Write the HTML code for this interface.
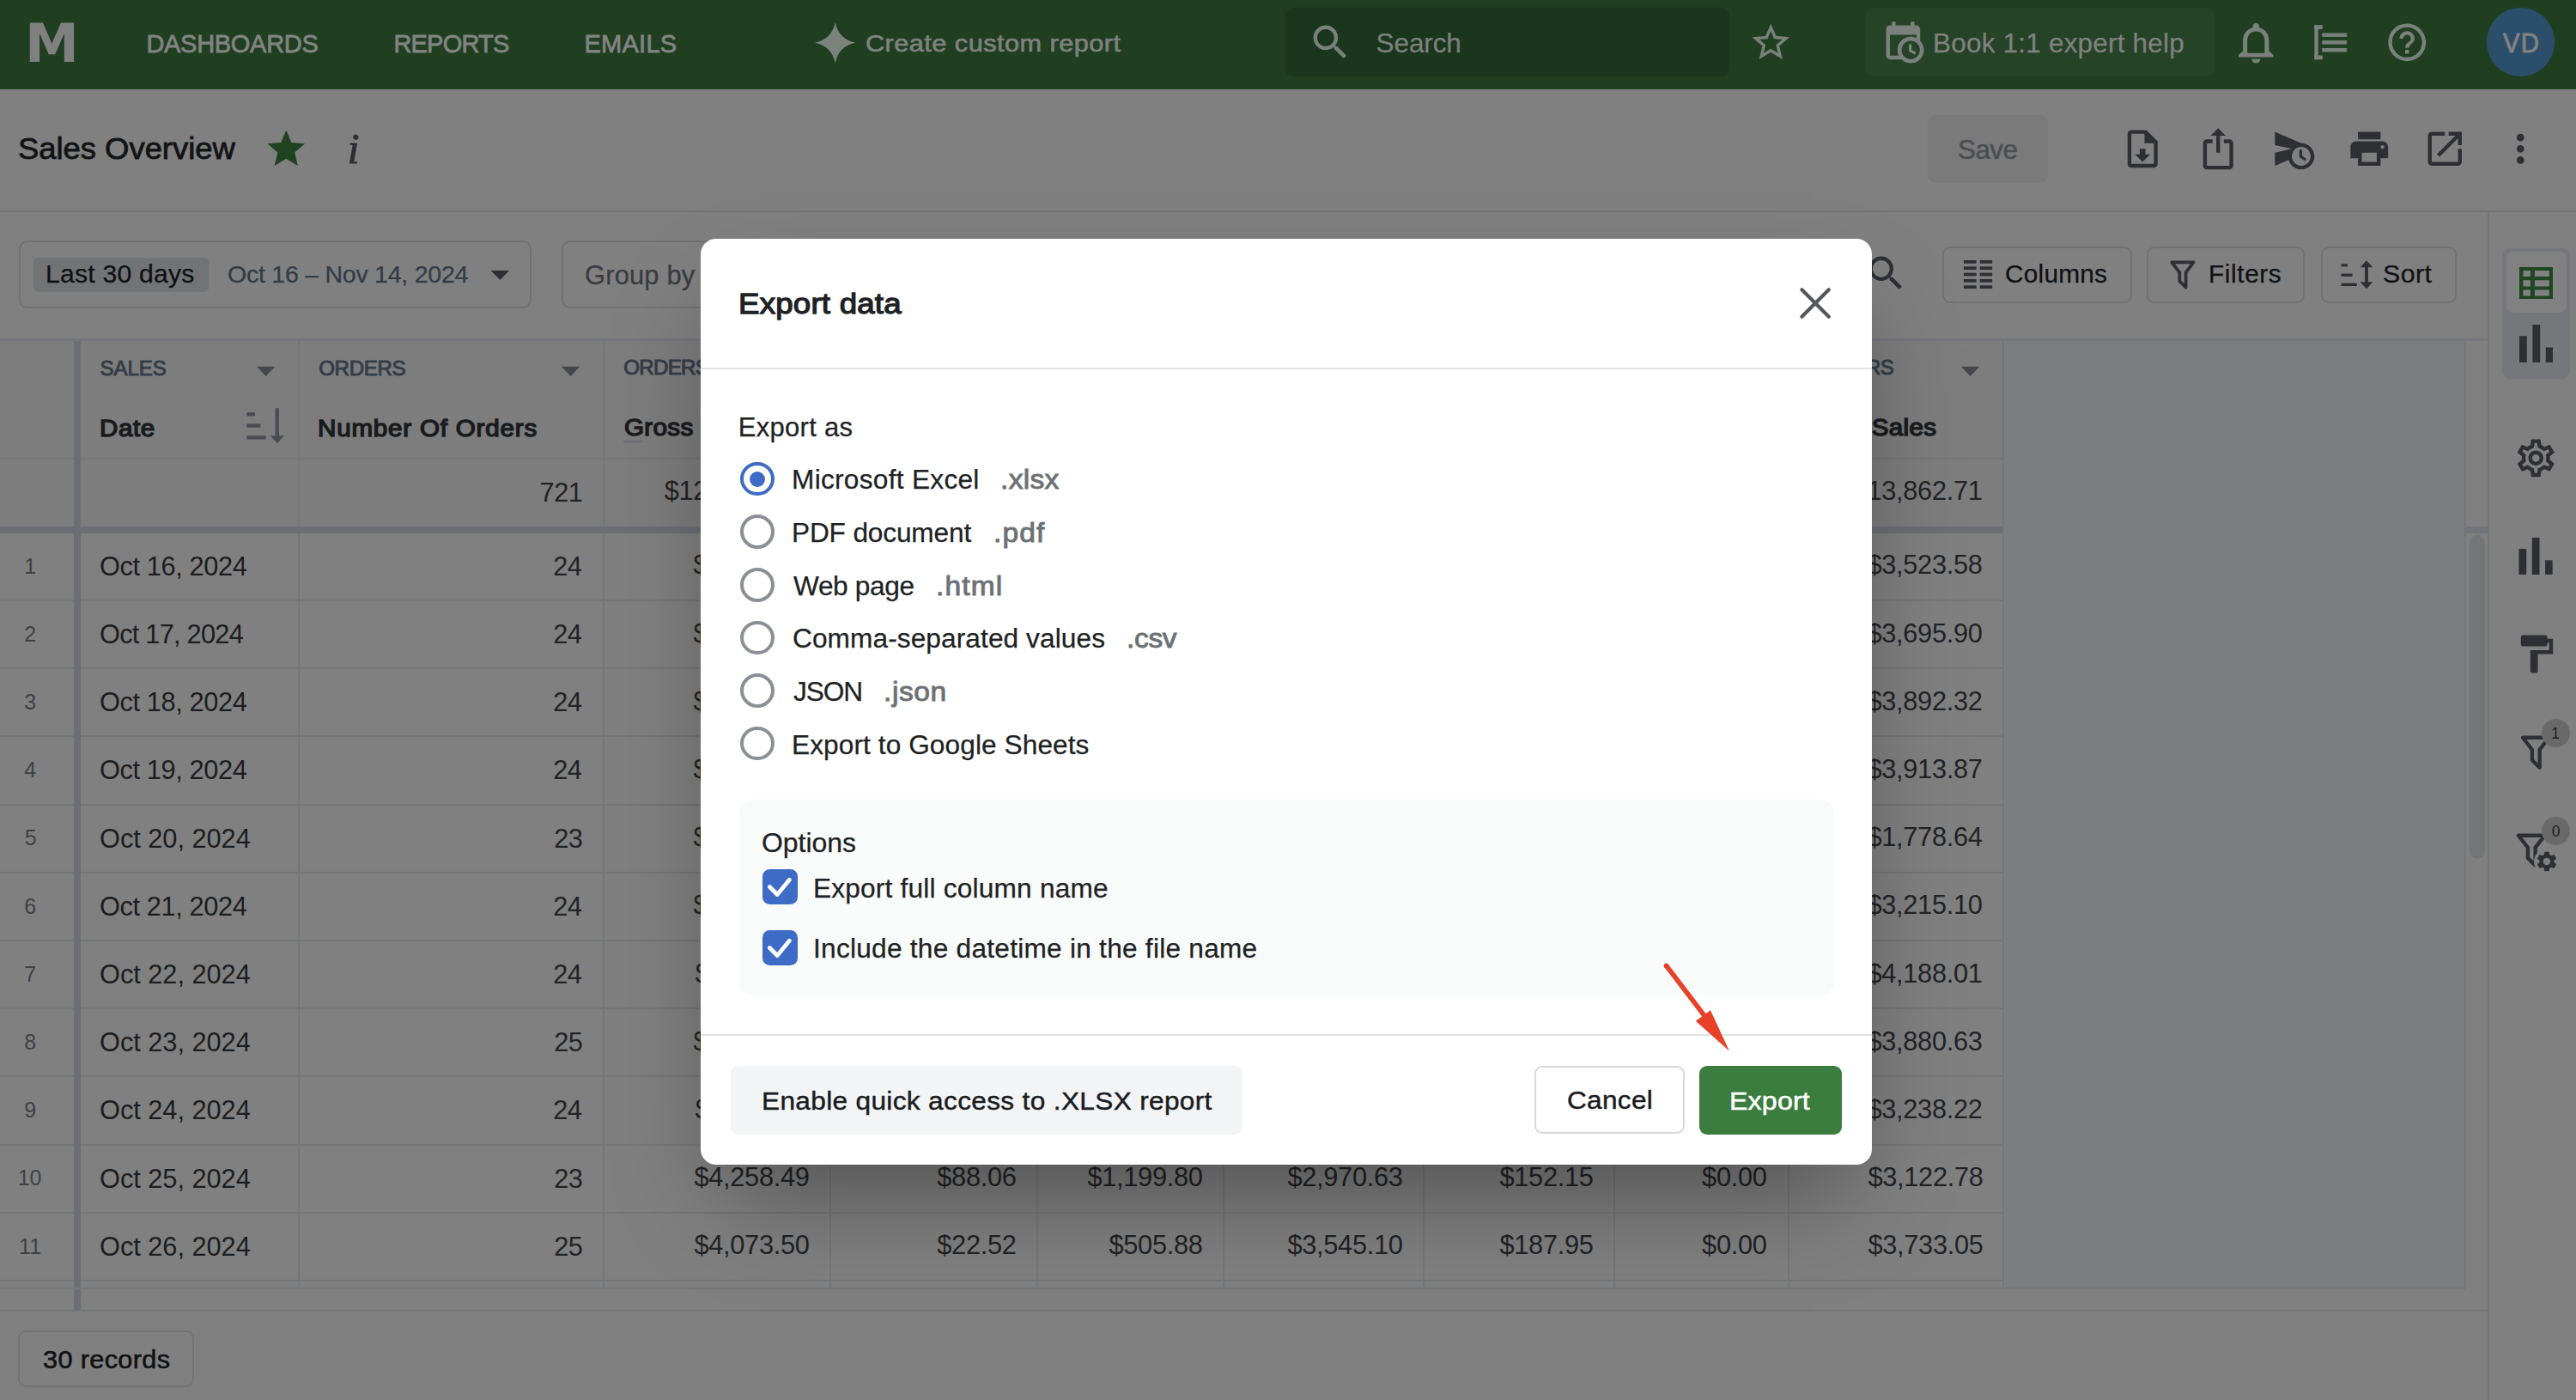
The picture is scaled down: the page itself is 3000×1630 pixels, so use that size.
<!DOCTYPE html>
<html lang="en"><head><meta charset="utf-8"><title>Sales Overview - Export data</title>
<style>
html,body{margin:0;padding:0;}
body{width:3000px;height:1630px;position:relative;overflow:hidden;background:#808080;font-family:"Liberation Sans", sans-serif;}
.a{position:absolute;display:block;}
.t{white-space:nowrap;line-height:1;}
</style></head><body>
<div class="a" style="left:0px;top:0px;width:3000px;height:104px;background:#1f3f20;"></div>
<span class="a t" style="top:20.10px;font-size:61.4px;color:#808080;font-weight:700;font-family:'DejaVu Sans',serif;left:29.00px;transform:scaleX(1.03);transform-origin:0 0;">M</span>
<span class="a t" style="top:36.73px;font-size:29px;color:#828382;letter-spacing:-0.294px;-webkit-text-stroke:0.8px #828382;left:170.40px;">DASHBOARDS</span>
<span class="a t" style="top:36.73px;font-size:29px;color:#828382;letter-spacing:-0.779px;-webkit-text-stroke:0.8px #828382;left:458.40px;">REPORTS</span>
<span class="a t" style="top:36.73px;font-size:29px;color:#828382;letter-spacing:0.285px;-webkit-text-stroke:0.8px #828382;left:680.40px;">EMAILS</span>
<svg class="a" style="left:949.3px;top:25.8px;" width="47.4" height="47.4" viewBox="-23.7 -23.7 47.4 47.4"><path fill="#7b847c" d="M0 -23.7 Q4.029 -4.029 23.7 0 Q4.029 4.029 0 23.7 Q-4.029 4.029 -23.7 0 Q-4.029 -4.029 0 -23.7Z"/></svg>
<span class="a t" style="top:37.03px;font-size:27.6px;color:#808180;letter-spacing:0.441px;-webkit-text-stroke:0.65px #808180;transform:scaleX(1.11);transform-origin:0 0;left:1008.40px;">Create custom report</span>
<div class="a" style="left:1497px;top:9px;width:517px;height:80px;background:#1a361c;border-radius:9px;"></div>
<svg class="a" style="left:1523.40px;top:22.90px" width="52.80" height="52.80" viewBox="0 0 24 24"><path fill="#7a807b" d="M15.5 14h-.79l-.28-.27C15.41 12.59 16 11.11 16 9.5 16 5.91 13.09 3 9.5 3S3 5.91 3 9.5 5.91 16 9.5 16c1.61 0 3.09-.59 4.23-1.57l.27.28v.79l5 4.99L20.49 19l-4.99-5zm-6 0C7.01 14 5 11.99 5 9.5S7.01 5 9.5 5 14 7.01 14 9.5 11.99 14 9.5 14z"/></svg>
<span class="a t" style="top:35.17px;font-size:31.5px;color:#7e807e;letter-spacing:-0.123px;-webkit-text-stroke:0.25px #7e807e;left:1602.60px;">Search</span>
<svg class="a" style="left:2035.50px;top:23.30px" width="52.56" height="52.56" viewBox="0 0 24 24"><path fill="#7a807b" d="M22 9.24l-7.19-.62L12 2 9.19 8.63 2 9.24l5.46 4.73L5.82 21 12 17.27 18.18 21l-1.63-7.03L22 9.24zM12 15.4l-3.76 2.27 1-4.28-3.32-2.88 4.38-.38L12 6.1l1.71 4.04 4.38.38-3.32 2.88 1 4.28L12 15.4z"/></svg>
<div class="a" style="left:2172px;top:9px;width:407px;height:80px;background:#254326;border-radius:9px;"></div>
<svg class="a" style="left:2189.70px;top:22.90px" width="52.80" height="52.80" viewBox="0 0 24 24"><path fill="#7a807b" d="M15,13H16.5V15.82L18.94,17.23L18.19,18.53L15,16.69V13M19,8H5V19H9.67C9.24,18.09 9,17.07 9,16A7,7 0 0,1 16,9C17.07,9 18.09,9.24 19,9.67V8M5,21C3.89,21 3,20.1 3,19V5C3,3.89 3.89,3 5,3H6V1H8V3H16V1H18V3H19A2,2 0 0,1 21,5V11.1C22.24,12.36 23,14.09 23,16A7,7 0 0,1 16,23C14.09,23 12.36,22.24 11.1,21H5M16,11.15A4.85,4.85 0 0,0 11.15,16C11.15,18.68 13.32,20.85 16,20.85A4.85,4.85 0 0,0 20.85,16C20.85,13.32 18.68,11.15 16,11.15Z"/></svg>
<span class="a t" style="top:35.37px;font-size:31.5px;color:#808180;letter-spacing:0.202px;-webkit-text-stroke:0.25px #808180;left:2251.00px;">Book 1:1 expert help</span>
<svg class="a" style="left:2596.90px;top:21.20px" width="60.60" height="57.36" viewBox="0 0 24 24" preserveAspectRatio="none"><path fill="#7a807b" d="M12 22c1.1 0 2-.9 2-2h-4c0 1.1.9 2 2 2zm6-6v-5c0-3.07-1.63-5.64-4.5-6.32V4c0-.83-.67-1.5-1.5-1.5s-1.5.67-1.5 1.5v.68C7.64 5.36 6 7.92 6 11v5l-2 2v1h16v-1l-2-2zm-2 1H8v-6c0-2.48 1.51-4.5 4-4.5s4 2.02 4 4.5v6z"/></svg>
<svg class="a" style="left:2690px;top:24px;" width="50" height="50" viewBox="0 0 50 50"><g fill="#7a807b"><rect x="5.4" y="5.2" width="4.4" height="40.1"/><rect x="5.4" y="5.2" width="9.4" height="4.8"/><rect x="5.4" y="40.5" width="9.4" height="4.8"/><rect x="14.3" y="14.5" width="28.9" height="4.4"/><rect x="14.3" y="23.1" width="28.9" height="4.5"/><rect x="14.3" y="31.9" width="28.9" height="4.6"/></g></svg>
<svg class="a" style="left:2777.00px;top:23.10px" width="52.56" height="52.56" viewBox="0 0 24 24"><path fill="#7a807b" d="M11 18h2v-2h-2v2zm1-16C6.48 2 2 6.48 2 12s4.48 10 10 10 10-4.48 10-10S17.52 2 12 2zm0 18c-4.41 0-8-3.59-8-8s3.59-8 8-8 8 3.59 8 8-3.59 8-8 8zm0-14c-2.21 0-4 1.79-4 4h2c0-1.1.9-2 2-2s2 .9 2 2c0 2-3 1.75-3 5h2c0-2.25 3-2.5 3-5 0-2.21-1.79-4-4-4z"/></svg>
<div class="a" style="left:2896px;top:9px;width:79px;height:80.3px;background:#2b4f6b;border-radius:41px;"></div>
<span class="a t" style="top:35.37px;font-size:31.5px;color:#828282;letter-spacing:1.200px;-webkit-text-stroke:0.9px #828282;transform:scaleX(0.93);transform-origin:0 0;left:2914.79px;">VD</span>
<span class="a t" style="top:155.81px;font-size:35.4px;color:#121314;letter-spacing:-0.032px;-webkit-text-stroke:0.8px #121314;transform:scaleX(1.03);transform-origin:0 0;left:21.00px;">Sales Overview</span>
<svg class="a" style="left:307.20px;top:147.00px" width="52.56" height="52.56" viewBox="0 0 24 24"><path fill="#1f4220" d="M12 17.27L18.18 21l-1.64-7.03L22 9.24l-7.19-.61L12 2 9.19 8.63 2 9.24l5.46 4.73L5.82 21z"/></svg>
<span class="a t" style="top:147.90px;font-size:51px;color:#2f3033;font-style:italic;font-family:'Liberation Serif',serif;-webkit-text-stroke:0.9px #2f3033;left:404.61px;">i</span>
<div class="a" style="left:2245px;top:134px;width:140px;height:79px;background:#7a7a7a;border-radius:9px;"></div>
<span class="a t" style="top:159.17px;font-size:31.5px;color:#4b4d51;letter-spacing:-0.604px;-webkit-text-stroke:0.5px #4b4d51;left:2280.00px;">Save</span>
<svg class="a" style="left:2469.20px;top:146.80px" width="52.56" height="52.56" viewBox="0 0 24 24"><path fill="#2e2f32" d="M14,2H6A2,2 0 0,0 4,4V20A2,2 0 0,0 6,22H18A2,2 0 0,0 20,20V8L14,2M18,20H6V4H13V9H18V20M12,19L8,15H10.5V12H13.5V15H16L12,19Z"/></svg>
<svg class="a" style="left:2557.20px;top:146.80px" width="52.56" height="52.56" viewBox="0 0 24 24"><path fill="#2e2f32" d="M12,1L8,5H11V14H13V5H16M18,23H6C4.89,23 4,22.1 4,21V9A2,2 0 0,1 6,7H9V9H6V21H18V9H15V7H18A2,2 0 0,1 20,9V21A2,2 0 0,1 18,23Z"/></svg>
<svg class="a" style="left:2645.00px;top:147.40px" width="52.56" height="52.56" viewBox="0 0 24 24"><path fill="#2e2f32" d="M16.5 12.5H15v4l3 2 .75-1.23-2.25-1.52V12.5zM16 9L2 3v7l9 2-9 2v7l7.27-3.11C10.09 20.83 12.79 23 16 23c3.86 0 7-3.14 7-7s-3.14-7-7-7zm0 12c-2.75 0-4.98-2.22-5-4.97v-.07c.02-2.74 2.25-4.97 5-4.97 2.76 0 5 2.24 5 5S18.76 21 16 21z"/></svg>
<svg class="a" style="left:2733.30px;top:146.80px" width="52.56" height="52.56" viewBox="0 0 24 24"><path fill="#2e2f32" d="M19 8H5c-1.66 0-3 1.34-3 3v6h4v4h12v-4h4v-6c0-1.66-1.34-3-3-3zm-3 11H8v-5h8v5zm3-7c-.55 0-1-.45-1-1s.45-1 1-1 1 .45 1 1-.45 1-1 1zm-1-9H6v4h12V3z"/></svg>
<svg class="a" style="left:2820.80px;top:146.80px" width="52.56" height="52.56" viewBox="0 0 24 24"><path fill="#2e2f32" d="M19 19H5V5h7V3H5c-1.11 0-2 .9-2 2v14c0 1.1.89 2 2 2h14c1.1 0 2-.9 2-2v-7h-2v7zM14 3v2h3.59l-9.83 9.83 1.41 1.41L19 6.41V10h2V3h-7z"/></svg>
<svg class="a" style="left:2909.20px;top:146.80px" width="52.56" height="52.56" viewBox="0 0 24 24"><path fill="#2e2f32" d="M12 8c1.1 0 2-.9 2-2s-.9-2-2-2-2 .9-2 2 .9 2 2 2zm0 2c-1.1 0-2 .9-2 2s.9 2 2 2 2-.9 2-2-.9-2-2-2zm0 6c-1.1 0-2 .9-2 2s.9 2 2 2 2-.9 2-2-.9-2-2-2z"/></svg>
<div class="a" style="left:0px;top:245px;width:3000px;height:2px;background:#737476;"></div>
<div class="a" style="left:21.5px;top:280px;width:597px;height:78.5px;border:2px solid #707274;box-sizing:border-box;border-radius:10px;"></div>
<div class="a" style="left:39px;top:299.5px;width:204px;height:40px;background:#717375;border-radius:5px;"></div>
<span class="a t" style="top:305.13px;font-size:29px;color:#0f1011;letter-spacing:0.207px;-webkit-text-stroke:0.25px #0f1011;transform:scaleX(1.04);transform-origin:0 0;left:53.00px;">Last 30 days</span>
<span class="a t" style="top:305.53px;font-size:28px;color:#333b45;letter-spacing:-0.264px;-webkit-text-stroke:0.25px #333b45;transform:scaleX(1.02);transform-origin:0 0;left:265.40px;">Oct 16 &ndash; Nov 14, 2024</span>
<svg class="a" style="left:571px;top:314px;" width="24" height="14" viewBox="0 0 24 14"><path fill="#2e2f32" d="M0.6 0.9h21.5L11.35 12z"/></svg>
<div class="a" style="left:654px;top:280px;width:1200px;height:78.5px;border:2px solid #707274;box-sizing:border-box;border-radius:10px;"></div>
<span class="a t" style="top:305.52px;font-size:30.8px;color:#3a3c3f;letter-spacing:0.216px;-webkit-text-stroke:0.25px #3a3c3f;left:681.00px;">Group by</span>
<svg class="a" style="left:2170.10px;top:292.40px" width="52.56" height="52.56" viewBox="0 0 24 24"><path fill="#2e2f32" d="M15.5 14h-.79l-.28-.27C15.41 12.59 16 11.11 16 9.5 16 5.91 13.09 3 9.5 3S3 5.91 3 9.5 5.91 16 9.5 16c1.61 0 3.09-.59 4.23-1.57l.27.28v.79l5 4.99L20.49 19l-4.99-5zm-6 0C7.01 14 5 11.99 5 9.5S7.01 5 9.5 5 14 7.01 14 9.5 11.99 14 9.5 14z"/></svg>
<div class="a" style="left:2262px;top:287px;width:220.6px;height:65.7px;border:2px solid #707274;box-sizing:border-box;border-radius:9px;"></div>
<svg class="a" style="left:2287.3px;top:303.3px;" width="34" height="34" viewBox="0 0 34 34"><g fill="#2e2f32"><rect x="0" y="0.00" width="14.7" height="3.7"/><rect x="18.7" y="0.00" width="14.5" height="3.7"/><rect x="0" y="7.33" width="14.7" height="3.7"/><rect x="18.7" y="7.33" width="14.5" height="3.7"/><rect x="0" y="14.66" width="14.7" height="3.7"/><rect x="18.7" y="14.66" width="14.5" height="3.7"/><rect x="0" y="21.99" width="14.7" height="3.7"/><rect x="18.7" y="21.99" width="14.5" height="3.7"/><rect x="0" y="29.32" width="14.7" height="3.7"/><rect x="18.7" y="29.32" width="14.5" height="3.7"/></g></svg>
<span class="a t" style="top:305.13px;font-size:29px;color:#101113;letter-spacing:0.183px;-webkit-text-stroke:0.25px #101113;transform:scaleX(1.03);transform-origin:0 0;left:2335.00px;">Columns</span>
<div class="a" style="left:2500.3px;top:287px;width:184.2px;height:65.7px;border:2px solid #707274;box-sizing:border-box;border-radius:9px;"></div>
<svg class="a" style="left:2520.00px;top:297.50px" width="43.92" height="43.92" viewBox="0 0 24 24"><path fill="#2e2f32" d="M15,19.88C15.04,20.18 14.94,20.5 14.71,20.71C14.32,21.1 13.69,21.1 13.3,20.71L9.29,16.7C9.06,16.47 8.96,16.16 9,15.87V10.75L4.21,4.62C3.87,4.19 3.95,3.56 4.38,3.22C4.57,3.08 4.78,3 5,3V3H19V3C19.22,3 19.43,3.08 19.62,3.22C20.05,3.56 20.13,4.19 19.79,4.62L15,10.75V19.88M7.04,5L11,10.06V15.58L13,17.58V10.05L16.96,5H7.04Z"/></svg>
<span class="a t" style="top:305.13px;font-size:29px;color:#101113;letter-spacing:0.563px;-webkit-text-stroke:0.25px #101113;transform:scaleX(1.03);transform-origin:0 0;left:2572.00px;">Filters</span>
<div class="a" style="left:2703.3px;top:287px;width:157.3px;height:65.7px;border:2px solid #707274;box-sizing:border-box;border-radius:9px;"></div>
<svg class="a" style="left:2726px;top:302px;" width="40" height="36" viewBox="0 0 40 36"><g fill="#2e2f32"><rect x="0.6" y="5.3" width="7.4" height="3.1"/><rect x="0.6" y="16.6" width="12.9" height="3.3"/><rect x="0.6" y="27.7" width="18.2" height="3.3"/><rect x="28.1" y="6" width="3.8" height="24"/><path d="M30 1.3l7.3 8h-14.6zM30 34.2l7.3-8h-14.6z"/></g></svg>
<span class="a t" style="top:305.13px;font-size:29px;color:#101113;letter-spacing:0.366px;-webkit-text-stroke:0.25px #101113;transform:scaleX(1.05);transform-origin:0 0;left:2775.00px;">Sort</span>
<div class="a" style="left:2897px;top:247px;width:2px;height:1383px;background:#737476;"></div>
<div class="a" style="left:2914px;top:289px;width:79px;height:152px;background:#76777a;border-radius:9px;"></div>
<div class="a" style="left:2919px;top:293px;width:70px;height:71px;background:#818181;border-radius:8px;"></div>
<svg class="a" style="left:2933.6px;top:310.7px;" width="39.6" height="37.6" viewBox="0 0 39.6 37.6"><path fill="#1e4620" fill-rule="evenodd" d="M0 0h39.6v37.6h-39.6zM4.5 4.1v7h8.4v-7zM17.9 4.1v7h17v-7zM4.5 15.3v7.1h8.4v-7.1zM17.9 15.3v7.1h17v-7.1zM4.5 26.5v7.000h8.4v-7zM17.9 26.5v7h17v-7z"/></svg>
<svg class="a" style="left:2933.6px;top:378.3px;" width="39.6" height="44" viewBox="0 0 39.6 44"><g fill="#2e2f32"><rect x="0" y="13.2" width="8.8" height="30.8"/><rect x="15.4" y="0" width="8.8" height="44"/><rect x="30.8" y="26.5" width="8.7" height="17.5"/></g></svg>
<svg class="a" style="left:2927.20px;top:507.20px" width="52.56" height="52.56" viewBox="0 0 24 24"><path fill="#2e2f32" d="M19.43 12.98c.04-.32.07-.64.07-.98 0-.34-.03-.66-.07-.98l2.11-1.65c.19-.15.24-.42.12-.64l-2-3.46c-.09-.16-.26-.25-.44-.25-.06 0-.12.01-.17.03l-2.49 1c-.52-.4-1.08-.73-1.69-.98l-.38-2.65C14.46 2.18 14.25 2 14 2h-4c-.25 0-.46.18-.49.42l-.38 2.65c-.61.25-1.17.59-1.69.98l-2.49-1c-.06-.02-.12-.03-.18-.03-.17 0-.34.09-.43.25l-2 3.46c-.13.22-.07.49.12.64l2.11 1.65c-.04.32-.07.65-.07.98 0 .33.03.66.07.98l-2.11 1.65c-.19.15-.24.42-.12.64l2 3.46c.09.16.26.25.44.25.06 0 .12-.01.17-.03l2.49-1c.52.4 1.08.73 1.69.98l.38 2.65c.03.24.24.42.49.42h4c.25 0 .46-.18.49-.42l.38-2.65c.61-.25 1.17-.59 1.69-.98l2.49 1c.06.02.12.03.18.03.17 0 .34-.09.43-.25l2-3.46c.12-.22.07-.49-.12-.64l-2.11-1.65zm-1.98-1.71c.04.31.05.52.05.73 0 .21-.02.43-.05.73l-.14 1.13.89.7 1.08.84-.7 1.21-1.27-.51-1.04-.42-.9.68c-.43.32-.84.56-1.25.73l-1.06.43-.16 1.13-.2 1.35h-1.4l-.19-1.35-.16-1.13-1.06-.43c-.43-.18-.83-.41-1.23-.71l-.91-.7-1.06.43-1.27.51-.7-1.21 1.08-.84.89-.7-.14-1.13c-.03-.31-.05-.54-.05-.74s.02-.43.05-.73l.14-1.13-.89-.7-1.08-.84.7-1.21 1.27.51 1.04.42.9-.68c.43-.32.84-.56 1.25-.73l1.06-.43.16-1.13.2-1.35h1.39l.19 1.35.16 1.13 1.06.43c.43.18.83.41 1.23.71l.91.7 1.06-.43 1.27-.51.7 1.21-1.07.85-.89.7.14 1.13zM12 8c-2.21 0-4 1.79-4 4s1.790 4 4 4 4-1.790 4-4-1.790-4-4-4zm0 6c-1.100 0-2-.9-2-2s.9-2 2-2 2 .9 2 2-.9 2-2 2z"/></svg>
<svg class="a" style="left:2933px;top:625.5px;" width="40.3" height="43.7" viewBox="0 0 39.6 44"><g fill="#2e2f32"><rect x="0" y="13.2" width="8.8" height="30.8"/><rect x="15.4" y="0" width="8.8" height="44"/><rect x="30.8" y="26.5" width="8.7" height="17.5"/></g></svg>
<svg class="a" style="left:2927.00px;top:734.60px" width="52.80" height="52.80" viewBox="0 0 24 24"><path fill="#2e2f32" d="M18 4V3c0-.55-.45-1-1-1H5c-.55 0-1 .45-1 1v4c0 .55.45 1 1 1h12c.55 0 1-.45 1-1V6h1v4H9v11c0 .55.45 1 1 1h2c.55 0 1-.45 1-1v-9h8V4h-3z"/></svg>
<svg class="a" style="left:2926.50px;top:849.80px" width="52.56" height="52.56" viewBox="0 0 24 24"><path fill="#2e2f32" d="M15,19.88C15.04,20.18 14.94,20.5 14.71,20.71C14.32,21.1 13.69,21.1 13.3,20.71L9.29,16.7C9.06,16.47 8.96,16.16 9,15.87V10.75L4.21,4.62C3.87,4.19 3.95,3.56 4.38,3.22C4.57,3.08 4.78,3 5,3V3H19V3C19.22,3 19.43,3.08 19.62,3.22C20.05,3.56 20.13,4.19 19.79,4.62L15,10.75V19.88M7.04,5L11,10.06V15.58L13,17.58V10.05L16.96,5H7.04Z"/></svg>
<div class="a" style="left:2960px;top:836.8px;width:33px;height:33px;background:#696969;border-radius:17px;"></div>
<span class="a t" style="top:846.11px;font-size:17.5px;color:#1c1d1e;left:2971.13px;">1</span>
<svg class="a" style="left:2922.00px;top:963.80px" width="52.56" height="52.56" viewBox="0 0 24 24"><path fill="#2e2f32" d="M15,19.88C15.04,20.18 14.94,20.5 14.71,20.71C14.32,21.1 13.69,21.1 13.3,20.71L9.29,16.7C9.06,16.47 8.96,16.16 9,15.87V10.75L4.21,4.62C3.87,4.19 3.95,3.56 4.38,3.22C4.57,3.08 4.78,3 5,3V3H19V3C19.22,3 19.43,3.08 19.62,3.22C20.05,3.56 20.13,4.19 19.79,4.62L15,10.75V19.88M7.04,5L11,10.06V15.58L13,17.58V10.05L16.96,5H7.04Z"/></svg>
<svg class="a" style="left:2950.4px;top:987.4px;" width="32" height="32" viewBox="0 0 32 32"><circle cx="16" cy="16" r="15" fill="#808080"/><path transform="translate(1.84 1.84) scale(1.18)" fill="#2e2f32" d="M19.14 12.94c.04-.3.06-.61.06-.94 0-.32-.02-.64-.07-.94l2.030-1.580c.18-.14.23-.41.12-.61l-1.920-3.320c-.12-.22-.37-.29-.59-.22l-2.390.96c-.5-.38-1.030-.7-1.620-.94l-.36-2.540c-.04-.24-.24-.41-.48-.41h-3.840c-.24 0-.43.17-.47.41l-.36 2.540c-.59.24-1.130.57-1.620.94l-2.390-.96c-.22-.08-.47 0-.59.22L2.740 8.870c-.12.21-.08.47.12.61l2.030 1.580c-.05.3-.09.63-.09.94s.02.64.07.94l-2.030 1.580c-.18.14-.23.41-.12.61l1.920 3.320c.12.22.37.29.59.22l2.390-.96c.5.38 1.030.7 1.620.94l.36 2.540c.05.24.24.41.48.41h3.840c.24 0 .44-.17.47-.41l.36-2.540c.59-.24 1.130-.56 1.620-.94l2.390.96c.22.08.47 0 .59-.22l1.920-3.320c.12-.22.07-.47-.12-.61l-2.010-1.580zM12 15.600c-1.980 0-3.600-1.620-3.600-3.600s1.620-3.600 3.600-3.600 3.600 1.620 3.600 3.600-1.620 3.600-3.600 3.600z"/></svg>
<div class="a" style="left:2960px;top:950.7px;width:33px;height:33px;background:#696969;border-radius:17px;"></div>
<span class="a t" style="top:960.11px;font-size:17.5px;color:#1c1d1e;left:2971.63px;">0</span>
<div class="a" style="left:0px;top:397px;width:2332px;height:216px;background:#7d7d7d;"></div>
<div class="a" style="left:2332px;top:397px;width:539px;height:1103px;background:#7c7d7f;"></div>
<div class="a" style="left:0px;top:394px;width:2897px;height:3px;background:#737578;"></div>
<div class="a" style="left:346.5px;top:397px;width:2px;height:1103px;background:#747678;"></div>
<div class="a" style="left:701.5px;top:397px;width:2px;height:1103px;background:#747678;"></div>
<div class="a" style="left:965.5px;top:397px;width:2px;height:1103px;background:#747678;"></div>
<div class="a" style="left:1206.5px;top:397px;width:2px;height:1103px;background:#747678;"></div>
<div class="a" style="left:1423.5px;top:397px;width:2px;height:1103px;background:#747678;"></div>
<div class="a" style="left:1656.5px;top:397px;width:2px;height:1103px;background:#747678;"></div>
<div class="a" style="left:1878.5px;top:397px;width:2px;height:1103px;background:#747678;"></div>
<div class="a" style="left:2081.5px;top:397px;width:2px;height:1103px;background:#747678;"></div>
<div class="a" style="left:2331.5px;top:397px;width:2px;height:1103px;background:#747678;"></div>
<div class="a" style="left:2870px;top:397px;width:2px;height:1103px;background:#747678;"></div>
<div class="a" style="left:0px;top:533px;width:2332px;height:2px;background:#747678;"></div>
<div class="a" style="left:0px;top:697.9px;width:2332px;height:2px;background:#747678;"></div>
<div class="a" style="left:0px;top:777.1px;width:2332px;height:2px;background:#747678;"></div>
<div class="a" style="left:0px;top:856.3px;width:2332px;height:2px;background:#747678;"></div>
<div class="a" style="left:0px;top:935.5px;width:2332px;height:2px;background:#747678;"></div>
<div class="a" style="left:0px;top:1014.7px;width:2332px;height:2px;background:#747678;"></div>
<div class="a" style="left:0px;top:1093.9px;width:2332px;height:2px;background:#747678;"></div>
<div class="a" style="left:0px;top:1173.1px;width:2332px;height:2px;background:#747678;"></div>
<div class="a" style="left:0px;top:1252.3px;width:2332px;height:2px;background:#747678;"></div>
<div class="a" style="left:0px;top:1331.5px;width:2332px;height:2px;background:#747678;"></div>
<div class="a" style="left:0px;top:1410.7px;width:2332px;height:2px;background:#747678;"></div>
<div class="a" style="left:0px;top:1489.9px;width:2332px;height:2px;background:#747678;"></div>
<div class="a" style="left:0px;top:612.7px;width:2332px;height:8.3px;background:#6c6e73;"></div>
<div class="a" style="left:2872px;top:612.7px;width:25px;height:8.3px;background:#737578;"></div>
<div class="a" style="left:85.5px;top:397px;width:8.5px;height:1129px;background:#6c6e73;"></div>
<div class="a" style="left:0px;top:1499px;width:2871px;height:2px;background:#747678;"></div>
<div class="a" style="left:0px;top:1525px;width:2898px;height:2px;background:#747678;"></div>
<div class="a" style="left:2875.5px;top:622.6px;width:18.8px;height:377.4px;background:#747577;border-radius:9.4px;"></div>
<span class="a t" style="top:417.09px;font-size:24.1px;color:#353d47;letter-spacing:-0.122px;-webkit-text-stroke:1.0px #353d47;left:116.60px;">SALES</span>
<svg class="a" style="left:298px;top:426.3px;" width="24" height="14" viewBox="0 0 24 14"><path fill="#45474b" d="M0.9 0.7h21.4L11.600 12.100z"/></svg>
<span class="a t" style="top:417.09px;font-size:24.1px;color:#353d47;letter-spacing:-0.339px;-webkit-text-stroke:1.0px #353d47;left:371.20px;">ORDERS</span>
<svg class="a" style="left:652.6px;top:426.3px;" width="24" height="14" viewBox="0 0 24 14"><path fill="#45474b" d="M0.9 0.7h21.4L11.600 12.100z"/></svg>
<span class="a t" style="top:416.24px;font-size:24.1px;color:#353d47;letter-spacing:-0.699px;-webkit-text-stroke:1.0px #353d47;left:726.30px;">ORDERS</span>
<span class="a t" style="top:416.24px;font-size:24.1px;color:#353d47;letter-spacing:-0.699px;-webkit-text-stroke:1.0px #353d47;left:990.30px;">ORDERS</span>
<span class="a t" style="top:416.24px;font-size:24.1px;color:#353d47;letter-spacing:-0.699px;-webkit-text-stroke:1.0px #353d47;left:1231.30px;">ORDERS</span>
<span class="a t" style="top:416.24px;font-size:24.1px;color:#353d47;letter-spacing:-0.699px;-webkit-text-stroke:1.0px #353d47;left:1448.30px;">ORDERS</span>
<span class="a t" style="top:416.24px;font-size:24.1px;color:#353d47;letter-spacing:-0.699px;-webkit-text-stroke:1.0px #353d47;left:1681.30px;">ORDERS</span>
<span class="a t" style="top:416.24px;font-size:24.1px;color:#353d47;letter-spacing:-0.699px;-webkit-text-stroke:1.0px #353d47;left:1903.30px;">ORDERS</span>
<span class="a t" style="top:416.24px;font-size:24.1px;color:#353d47;letter-spacing:-0.699px;-webkit-text-stroke:1.0px #353d47;left:2106.30px;">ORDERS</span>
<svg class="a" style="left:2283.3px;top:426.3px;" width="24" height="14" viewBox="0 0 24 14"><path fill="#45474b" d="M0.9 0.7h21.4L11.600 12.100z"/></svg>
<span class="a t" style="top:486.08px;font-size:26.9px;color:#1a1b1d;letter-spacing:0.517px;-webkit-text-stroke:1.4px #1a1b1d;transform:scaleX(1.1);transform-origin:0 0;left:115.80px;">Date</span>
<svg class="a" style="left:286px;top:474px;" width="48" height="44" viewBox="0 0 48 44"><g fill="#4a4c51"><rect x="1.3" y="6.2" width="9.6" height="4.3"/><rect x="1.3" y="19.4" width="16.1" height="4.4"/><rect x="1.3" y="33.2" width="22.5" height="4.3"/><rect x="34.6" y="1.2" width="4.3" height="33"/><path d="M28.5 33.2h16.700l-8.350 8.700z"/></g></svg>
<span class="a t" style="top:486.08px;font-size:26.9px;color:#1a1b1d;letter-spacing:0.723px;-webkit-text-stroke:1.4px #1a1b1d;transform:scaleX(1.1);transform-origin:0 0;left:370.00px;">Number Of Orders</span>
<span class="a t" style="top:485.03px;font-size:26.9px;color:#1a1b1d;letter-spacing:0.300px;-webkit-text-stroke:1.4px #1a1b1d;transform:scaleX(1.1);transform-origin:0 0;left:726.50px;">Gross Sales</span>
<span class="a t" style="top:485.03px;font-size:26.9px;color:#1a1b1d;letter-spacing:0.300px;-webkit-text-stroke:1.4px #1a1b1d;transform:scaleX(1.1);transform-origin:0 0;left:990.50px;">Discounts</span>
<span class="a t" style="top:485.03px;font-size:26.9px;color:#1a1b1d;letter-spacing:0.300px;-webkit-text-stroke:1.4px #1a1b1d;transform:scaleX(1.1);transform-origin:0 0;left:1231.50px;">Refunds</span>
<span class="a t" style="top:485.03px;font-size:26.9px;color:#1a1b1d;letter-spacing:0.300px;-webkit-text-stroke:1.4px #1a1b1d;transform:scaleX(1.1);transform-origin:0 0;left:1448.50px;">Net Sales</span>
<span class="a t" style="top:485.03px;font-size:26.9px;color:#1a1b1d;letter-spacing:0.300px;-webkit-text-stroke:1.4px #1a1b1d;transform:scaleX(1.1);transform-origin:0 0;left:1681.50px;">Shipping</span>
<span class="a t" style="top:485.03px;font-size:26.9px;color:#1a1b1d;letter-spacing:0.300px;-webkit-text-stroke:1.4px #1a1b1d;transform:scaleX(1.1);transform-origin:0 0;left:1903.50px;">Taxes</span>
<span class="a t" style="top:485.03px;font-size:26.9px;color:#1a1b1d;letter-spacing:0.300px;-webkit-text-stroke:1.4px #1a1b1d;transform:scaleX(1.1);transform-origin:0 0;left:2106.50px;">Total Sales</span>
<div class="a" style="left:726px;top:512.5px;width:22px;height:2px;background:#6c6e72;"></div>
<span class="a t" style="top:558.72px;font-size:30.8px;color:#222325;letter-spacing:-0.450px;left:628.51px;">721</span>
<span class="a t" style="top:557.12px;font-size:30.8px;color:#222325;letter-spacing:-0.300px;left:773.73px;">$125,480.36</span>
<span class="a t" style="top:557.12px;font-size:30.8px;color:#222325;letter-spacing:-0.300px;left:1047.88px;">$1,240.18</span>
<span class="a t" style="top:557.12px;font-size:30.8px;color:#222325;letter-spacing:-0.300px;left:1248.56px;">$14,210.77</span>
<span class="a t" style="top:557.12px;font-size:30.8px;color:#222325;letter-spacing:-0.300px;left:1467.02px;">$110,029.41</span>
<span class="a t" style="top:557.12px;font-size:30.8px;color:#222325;letter-spacing:-0.300px;left:1720.38px;">$3,833.30</span>
<span class="a t" style="top:557.12px;font-size:30.8px;color:#222325;letter-spacing:-0.300px;left:1981.12px;">$0.00</span>
<span class="a t" style="top:557.12px;font-size:30.8px;color:#222325;letter-spacing:-0.300px;left:2143.02px;">$113,862.71</span>
<span class="a t" style="top:647.04px;font-size:25px;color:#3f4145;left:28.15px;">1</span>
<span class="a t" style="top:645.12px;font-size:30.8px;color:#1c1d1f;letter-spacing:-0.414px;left:116.00px;">Oct 16, 2024</span>
<span class="a t" style="top:645.12px;font-size:30.8px;color:#222325;letter-spacing:-0.450px;left:644.18px;">24</span>
<span class="a t" style="top:643.32px;font-size:30.8px;color:#222325;letter-spacing:-0.300px;left:807.38px;">$4,012.40</span>
<span class="a t" style="top:643.32px;font-size:30.8px;color:#222325;letter-spacing:-0.300px;left:1089.80px;">$35.10</span>
<span class="a t" style="top:643.32px;font-size:30.8px;color:#222325;letter-spacing:-0.300px;left:1290.47px;">$620.22</span>
<span class="a t" style="top:643.32px;font-size:30.8px;color:#222325;letter-spacing:-0.300px;left:1498.38px;">$3,357.08</span>
<span class="a t" style="top:643.32px;font-size:30.8px;color:#222325;letter-spacing:-0.300px;left:1745.47px;">$166.50</span>
<span class="a t" style="top:643.32px;font-size:30.8px;color:#222325;letter-spacing:-0.300px;left:1981.12px;">$0.00</span>
<span class="a t" style="top:643.32px;font-size:30.8px;color:#222325;letter-spacing:-0.300px;left:2174.38px;">$3,523.58</span>
<span class="a t" style="top:726.44px;font-size:25px;color:#3f4145;left:28.15px;">2</span>
<span class="a t" style="top:723.52px;font-size:30.8px;color:#1c1d1f;letter-spacing:-0.778px;left:116.00px;">Oct 17, 2024</span>
<span class="a t" style="top:723.52px;font-size:30.8px;color:#222325;letter-spacing:-0.450px;left:644.18px;">24</span>
<span class="a t" style="top:722.52px;font-size:30.8px;color:#222325;letter-spacing:-0.300px;left:807.38px;">$4,230.15</span>
<span class="a t" style="top:722.52px;font-size:30.8px;color:#222325;letter-spacing:-0.300px;left:1089.80px;">$48.20</span>
<span class="a t" style="top:722.52px;font-size:30.8px;color:#222325;letter-spacing:-0.300px;left:1290.47px;">$662.35</span>
<span class="a t" style="top:722.52px;font-size:30.8px;color:#222325;letter-spacing:-0.300px;left:1498.38px;">$3,519.60</span>
<span class="a t" style="top:722.52px;font-size:30.8px;color:#222325;letter-spacing:-0.300px;left:1745.47px;">$176.30</span>
<span class="a t" style="top:722.52px;font-size:30.8px;color:#222325;letter-spacing:-0.300px;left:1981.12px;">$0.00</span>
<span class="a t" style="top:722.52px;font-size:30.8px;color:#222325;letter-spacing:-0.300px;left:2174.38px;">$3,695.90</span>
<span class="a t" style="top:804.64px;font-size:25px;color:#3f4145;left:28.15px;">3</span>
<span class="a t" style="top:802.92px;font-size:30.8px;color:#1c1d1f;letter-spacing:-0.414px;left:116.00px;">Oct 18, 2024</span>
<span class="a t" style="top:802.92px;font-size:30.8px;color:#222325;letter-spacing:-0.450px;left:644.18px;">24</span>
<span class="a t" style="top:801.72px;font-size:30.8px;color:#222325;letter-spacing:-0.300px;left:807.38px;">$4,418.60</span>
<span class="a t" style="top:801.72px;font-size:30.8px;color:#222325;letter-spacing:-0.300px;left:1089.80px;">$27.90</span>
<span class="a t" style="top:801.72px;font-size:30.8px;color:#222325;letter-spacing:-0.300px;left:1290.47px;">$684.18</span>
<span class="a t" style="top:801.72px;font-size:30.8px;color:#222325;letter-spacing:-0.300px;left:1498.38px;">$3,706.52</span>
<span class="a t" style="top:801.72px;font-size:30.8px;color:#222325;letter-spacing:-0.300px;left:1745.47px;">$185.80</span>
<span class="a t" style="top:801.72px;font-size:30.8px;color:#222325;letter-spacing:-0.300px;left:1981.12px;">$0.00</span>
<span class="a t" style="top:801.72px;font-size:30.8px;color:#222325;letter-spacing:-0.300px;left:2174.38px;">$3,892.32</span>
<span class="a t" style="top:883.84px;font-size:25px;color:#3f4145;left:28.15px;">4</span>
<span class="a t" style="top:882.32px;font-size:30.8px;color:#1c1d1f;letter-spacing:-0.414px;left:116.00px;">Oct 19, 2024</span>
<span class="a t" style="top:882.32px;font-size:30.8px;color:#222325;letter-spacing:-0.450px;left:644.18px;">24</span>
<span class="a t" style="top:880.92px;font-size:30.8px;color:#222325;letter-spacing:-0.300px;left:807.38px;">$4,405.20</span>
<span class="a t" style="top:880.92px;font-size:30.8px;color:#222325;letter-spacing:-0.300px;left:1089.80px;">$52.75</span>
<span class="a t" style="top:880.92px;font-size:30.8px;color:#222325;letter-spacing:-0.300px;left:1290.47px;">$625.28</span>
<span class="a t" style="top:880.92px;font-size:30.8px;color:#222325;letter-spacing:-0.300px;left:1498.38px;">$3,727.17</span>
<span class="a t" style="top:880.92px;font-size:30.8px;color:#222325;letter-spacing:-0.300px;left:1745.47px;">$186.70</span>
<span class="a t" style="top:880.92px;font-size:30.8px;color:#222325;letter-spacing:-0.300px;left:1981.12px;">$0.00</span>
<span class="a t" style="top:880.92px;font-size:30.8px;color:#222325;letter-spacing:-0.300px;left:2174.38px;">$3,913.87</span>
<span class="a t" style="top:963.04px;font-size:25px;color:#3f4145;left:28.65px;">5</span>
<span class="a t" style="top:961.72px;font-size:30.8px;color:#1c1d1f;letter-spacing:-0.051px;left:116.00px;">Oct 20, 2024</span>
<span class="a t" style="top:961.72px;font-size:30.8px;color:#222325;letter-spacing:-0.450px;left:645.18px;">23</span>
<span class="a t" style="top:960.12px;font-size:30.8px;color:#222325;letter-spacing:-0.300px;left:807.38px;">$1,988.31</span>
<span class="a t" style="top:960.12px;font-size:30.8px;color:#222325;letter-spacing:-0.300px;left:1089.80px;">$12.40</span>
<span class="a t" style="top:960.12px;font-size:30.8px;color:#222325;letter-spacing:-0.300px;left:1290.47px;">$282.07</span>
<span class="a t" style="top:960.12px;font-size:30.8px;color:#222325;letter-spacing:-0.300px;left:1498.38px;">$1,693.84</span>
<span class="a t" style="top:960.12px;font-size:30.8px;color:#222325;letter-spacing:-0.300px;left:1762.30px;">$84.80</span>
<span class="a t" style="top:960.12px;font-size:30.8px;color:#222325;letter-spacing:-0.300px;left:1981.12px;">$0.00</span>
<span class="a t" style="top:960.12px;font-size:30.8px;color:#222325;letter-spacing:-0.300px;left:2174.38px;">$1,778.64</span>
<span class="a t" style="top:1043.04px;font-size:25px;color:#3f4145;left:28.15px;">6</span>
<span class="a t" style="top:1041.12px;font-size:30.8px;color:#1c1d1f;letter-spacing:-0.414px;left:116.00px;">Oct 21, 2024</span>
<span class="a t" style="top:1041.12px;font-size:30.8px;color:#222325;letter-spacing:-0.450px;left:644.18px;">24</span>
<span class="a t" style="top:1039.32px;font-size:30.8px;color:#222325;letter-spacing:-0.300px;left:807.38px;">$3,655.42</span>
<span class="a t" style="top:1039.32px;font-size:30.8px;color:#222325;letter-spacing:-0.300px;left:1089.80px;">$41.60</span>
<span class="a t" style="top:1039.32px;font-size:30.8px;color:#222325;letter-spacing:-0.300px;left:1290.47px;">$552.22</span>
<span class="a t" style="top:1039.32px;font-size:30.8px;color:#222325;letter-spacing:-0.300px;left:1498.38px;">$3,061.60</span>
<span class="a t" style="top:1039.32px;font-size:30.8px;color:#222325;letter-spacing:-0.300px;left:1745.47px;">$153.50</span>
<span class="a t" style="top:1039.32px;font-size:30.8px;color:#222325;letter-spacing:-0.300px;left:1981.12px;">$0.00</span>
<span class="a t" style="top:1039.32px;font-size:30.8px;color:#222325;letter-spacing:-0.300px;left:2174.38px;">$3,215.10</span>
<span class="a t" style="top:1122.44px;font-size:25px;color:#3f4145;left:28.15px;">7</span>
<span class="a t" style="top:1119.52px;font-size:30.8px;color:#1c1d1f;letter-spacing:-0.051px;left:116.00px;">Oct 22, 2024</span>
<span class="a t" style="top:1119.52px;font-size:30.8px;color:#222325;letter-spacing:-0.450px;left:644.18px;">24</span>
<span class="a t" style="top:1118.52px;font-size:30.8px;color:#222325;letter-spacing:-0.300px;left:809.67px;">$4,711.38</span>
<span class="a t" style="top:1118.52px;font-size:30.8px;color:#222325;letter-spacing:-0.300px;left:1089.80px;">$66.05</span>
<span class="a t" style="top:1118.52px;font-size:30.8px;color:#222325;letter-spacing:-0.300px;left:1290.47px;">$657.32</span>
<span class="a t" style="top:1118.52px;font-size:30.8px;color:#222325;letter-spacing:-0.300px;left:1498.38px;">$3,988.01</span>
<span class="a t" style="top:1118.52px;font-size:30.8px;color:#222325;letter-spacing:-0.300px;left:1745.47px;">$200.00</span>
<span class="a t" style="top:1118.52px;font-size:30.8px;color:#222325;letter-spacing:-0.300px;left:1981.12px;">$0.00</span>
<span class="a t" style="top:1118.52px;font-size:30.8px;color:#222325;letter-spacing:-0.300px;left:2174.38px;">$4,188.01</span>
<span class="a t" style="top:1200.64px;font-size:25px;color:#3f4145;left:28.15px;">8</span>
<span class="a t" style="top:1198.92px;font-size:30.8px;color:#1c1d1f;letter-spacing:-0.051px;left:116.00px;">Oct 23, 2024</span>
<span class="a t" style="top:1198.92px;font-size:30.8px;color:#222325;letter-spacing:-0.450px;left:645.18px;">25</span>
<span class="a t" style="top:1197.72px;font-size:30.8px;color:#222325;letter-spacing:-0.300px;left:807.38px;">$4,390.77</span>
<span class="a t" style="top:1197.72px;font-size:30.8px;color:#222325;letter-spacing:-0.300px;left:1089.80px;">$58.14</span>
<span class="a t" style="top:1197.72px;font-size:30.8px;color:#222325;letter-spacing:-0.300px;left:1290.47px;">$637.40</span>
<span class="a t" style="top:1197.72px;font-size:30.8px;color:#222325;letter-spacing:-0.300px;left:1498.38px;">$3,695.23</span>
<span class="a t" style="top:1197.72px;font-size:30.8px;color:#222325;letter-spacing:-0.300px;left:1745.47px;">$185.40</span>
<span class="a t" style="top:1197.72px;font-size:30.8px;color:#222325;letter-spacing:-0.300px;left:1981.12px;">$0.00</span>
<span class="a t" style="top:1197.72px;font-size:30.8px;color:#222325;letter-spacing:-0.300px;left:2174.38px;">$3,880.63</span>
<span class="a t" style="top:1279.84px;font-size:25px;color:#3f4145;left:28.15px;">9</span>
<span class="a t" style="top:1278.32px;font-size:30.8px;color:#1c1d1f;letter-spacing:-0.051px;left:116.00px;">Oct 24, 2024</span>
<span class="a t" style="top:1278.32px;font-size:30.8px;color:#222325;letter-spacing:-0.450px;left:644.18px;">24</span>
<span class="a t" style="top:1276.92px;font-size:30.8px;color:#222325;letter-spacing:-0.300px;left:809.67px;">$3,711.90</span>
<span class="a t" style="top:1276.92px;font-size:30.8px;color:#222325;letter-spacing:-0.300px;left:1089.80px;">$44.38</span>
<span class="a t" style="top:1276.92px;font-size:30.8px;color:#222325;letter-spacing:-0.300px;left:1290.47px;">$584.00</span>
<span class="a t" style="top:1276.92px;font-size:30.8px;color:#222325;letter-spacing:-0.300px;left:1498.38px;">$3,083.52</span>
<span class="a t" style="top:1276.92px;font-size:30.8px;color:#222325;letter-spacing:-0.300px;left:1745.47px;">$154.70</span>
<span class="a t" style="top:1276.92px;font-size:30.8px;color:#222325;letter-spacing:-0.300px;left:1981.12px;">$0.00</span>
<span class="a t" style="top:1276.92px;font-size:30.8px;color:#222325;letter-spacing:-0.300px;left:2174.38px;">$3,238.22</span>
<span class="a t" style="top:1359.04px;font-size:25px;color:#3f4145;left:20.69px;">10</span>
<span class="a t" style="top:1357.72px;font-size:30.8px;color:#1c1d1f;letter-spacing:-0.051px;left:116.00px;">Oct 25, 2024</span>
<span class="a t" style="top:1357.72px;font-size:30.8px;color:#222325;letter-spacing:-0.450px;left:645.18px;">23</span>
<span class="a t" style="top:1356.12px;font-size:30.8px;color:#222325;letter-spacing:-0.300px;left:808.38px;">$4,258.49</span>
<span class="a t" style="top:1356.12px;font-size:30.8px;color:#222325;letter-spacing:-0.300px;left:1091.30px;">$88.06</span>
<span class="a t" style="top:1356.12px;font-size:30.8px;color:#222325;letter-spacing:-0.300px;left:1266.38px;">$1,199.80</span>
<span class="a t" style="top:1356.12px;font-size:30.8px;color:#222325;letter-spacing:-0.300px;left:1499.38px;">$2,970.63</span>
<span class="a t" style="top:1356.12px;font-size:30.8px;color:#222325;letter-spacing:-0.300px;left:1746.47px;">$152.15</span>
<span class="a t" style="top:1356.12px;font-size:30.8px;color:#222325;letter-spacing:-0.300px;left:1982.12px;">$0.00</span>
<span class="a t" style="top:1356.12px;font-size:30.8px;color:#222325;letter-spacing:-0.300px;left:2175.38px;">$3,122.78</span>
<span class="a t" style="top:1439.04px;font-size:25px;color:#3f4145;left:22.12px;">11</span>
<span class="a t" style="top:1437.12px;font-size:30.8px;color:#1c1d1f;letter-spacing:-0.051px;left:116.00px;">Oct 26, 2024</span>
<span class="a t" style="top:1437.12px;font-size:30.8px;color:#222325;letter-spacing:-0.450px;left:645.18px;">25</span>
<span class="a t" style="top:1435.32px;font-size:30.8px;color:#222325;letter-spacing:-0.300px;left:808.38px;">$4,073.50</span>
<span class="a t" style="top:1435.32px;font-size:30.8px;color:#222325;letter-spacing:-0.300px;left:1091.30px;">$22.52</span>
<span class="a t" style="top:1435.32px;font-size:30.8px;color:#222325;letter-spacing:-0.300px;left:1291.47px;">$505.88</span>
<span class="a t" style="top:1435.32px;font-size:30.8px;color:#222325;letter-spacing:-0.300px;left:1499.38px;">$3,545.10</span>
<span class="a t" style="top:1435.32px;font-size:30.8px;color:#222325;letter-spacing:-0.300px;left:1746.47px;">$187.95</span>
<span class="a t" style="top:1435.32px;font-size:30.8px;color:#222325;letter-spacing:-0.300px;left:1982.12px;">$0.00</span>
<span class="a t" style="top:1435.32px;font-size:30.8px;color:#222325;letter-spacing:-0.300px;left:2175.38px;">$3,733.05</span>
<div class="a" style="left:21.3px;top:1549.1px;width:204.7px;height:65.6px;border:2px solid #727476;box-sizing:border-box;border-radius:9px;"></div>
<span class="a t" style="top:1569.43px;font-size:29.2px;color:#111213;letter-spacing:0.338px;-webkit-text-stroke:0.6px #111213;transform:scaleX(1.05);transform-origin:0 0;left:49.80px;">30 records</span>
<div class="a" style="left:816px;top:278px;width:1364px;height:1078px;background:#ffffff;border-radius:18px;box-shadow:0 58px 116px -28px rgba(0,0,0,0.39);"></div>
<span class="a t" style="top:336.52px;font-size:33.9px;color:#202124;letter-spacing:0.223px;-webkit-text-stroke:1.3px #202124;transform:scaleX(1.08);transform-origin:0 0;left:860.40px;">Export data</span>
<svg class="a" style="left:2090px;top:329px;" width="48" height="48" viewBox="0 0 48 48"><path d="M8.4 8.300L39.800 39.700M39.800 8.300L8.4 39.700" stroke="#55575c" stroke-width="4.2" stroke-linecap="round" fill="none"/></svg>
<div class="a" style="left:816px;top:428px;width:1364px;height:2px;background:#e1e3e5;"></div>
<span class="a t" style="top:481.87px;font-size:31px;color:#202223;letter-spacing:0.281px;-webkit-text-stroke:0.25px #202223;left:859.80px;">Export as</span>
<div class="a" style="left:862.1px;top:537.8000000000001px;width:40px;height:39.6px;border:4.1px solid #3d6bc6;box-sizing:border-box;border-radius:20px;background:#fff;"></div>
<div class="a" style="left:873.0px;top:548.5px;width:18.2px;height:18.2px;background:#3d6bc6;border-radius:10px;"></div>
<span class="a t" style="top:543.12px;font-size:31px;color:#202223;letter-spacing:0.282px;-webkit-text-stroke:0.25px #202223;transform:scaleX(1.02);transform-origin:0 0;left:921.60px;">Microsoft Excel</span>
<span class="a t" style="top:543.37px;font-size:30.5px;color:#6d7175;letter-spacing:0.295px;-webkit-text-stroke:0.9px #6d7175;transform:scaleX(1.1);transform-origin:0 0;left:1165.00px;">.xlsx</span>
<div class="a" style="left:862.1px;top:599.4200000000001px;width:40px;height:39.6px;border:4.1px solid #8c9096;box-sizing:border-box;border-radius:20px;background:#fff;"></div>
<span class="a t" style="top:604.74px;font-size:31px;color:#202223;letter-spacing:-0.152px;-webkit-text-stroke:0.25px #202223;transform:scaleX(1.02);transform-origin:0 0;left:921.60px;">PDF document</span>
<span class="a t" style="top:604.99px;font-size:30.5px;color:#6d7175;letter-spacing:0.981px;-webkit-text-stroke:0.9px #6d7175;transform:scaleX(1.1);transform-origin:0 0;left:1156.80px;">.pdf</span>
<div class="a" style="left:862.1px;top:661.0400000000001px;width:40px;height:39.6px;border:4.1px solid #8c9096;box-sizing:border-box;border-radius:20px;background:#fff;"></div>
<span class="a t" style="top:667.30px;font-size:31px;color:#202223;letter-spacing:-0.361px;-webkit-text-stroke:0.25px #202223;transform:scaleX(1.02);transform-origin:0 0;left:923.60px;">Web page</span>
<span class="a t" style="top:666.61px;font-size:30.5px;color:#6d7175;letter-spacing:1.022px;-webkit-text-stroke:0.9px #6d7175;transform:scaleX(1.1);transform-origin:0 0;left:1090.00px;">.html</span>
<div class="a" style="left:862.1px;top:722.6600000000001px;width:40px;height:39.6px;border:4.1px solid #8c9096;box-sizing:border-box;border-radius:20px;background:#fff;"></div>
<span class="a t" style="top:727.98px;font-size:31px;color:#202223;letter-spacing:0.091px;-webkit-text-stroke:0.25px #202223;transform:scaleX(1.02);transform-origin:0 0;left:922.60px;">Comma-separated values</span>
<span class="a t" style="top:728.23px;font-size:30.5px;color:#6d7175;letter-spacing:-0.321px;-webkit-text-stroke:0.9px #6d7175;transform:scaleX(1.1);transform-origin:0 0;left:1312.00px;">.csv</span>
<div class="a" style="left:862.1px;top:784.2800000000001px;width:40px;height:39.6px;border:4.1px solid #8c9096;box-sizing:border-box;border-radius:20px;background:#fff;"></div>
<span class="a t" style="top:789.60px;font-size:31px;color:#202223;letter-spacing:-1.092px;-webkit-text-stroke:0.25px #202223;transform:scaleX(1.02);transform-origin:0 0;left:923.60px;">JSON</span>
<span class="a t" style="top:789.85px;font-size:30.5px;color:#6d7175;letter-spacing:0.527px;-webkit-text-stroke:0.9px #6d7175;transform:scaleX(1.1);transform-origin:0 0;left:1028.60px;">.json</span>
<div class="a" style="left:862.1px;top:845.9000000000001px;width:40px;height:39.6px;border:4.1px solid #8c9096;box-sizing:border-box;border-radius:20px;background:#fff;"></div>
<span class="a t" style="top:852.02px;font-size:31px;color:#202223;letter-spacing:0.084px;-webkit-text-stroke:0.25px #202223;transform:scaleX(1.02);transform-origin:0 0;left:921.60px;">Export to Google Sheets</span>
<div class="a" style="left:860.6px;top:931.3px;width:1275px;height:228.2px;background:#f9fafa;border-radius:16px;"></div>
<span class="a t" style="top:965.82px;font-size:31px;color:#202223;letter-spacing:-0.008px;-webkit-text-stroke:0.25px #202223;transform:scaleX(1.03);transform-origin:0 0;left:886.60px;">Options</span>
<div class="a" style="left:888px;top:1012px;width:41px;height:41px;background:#3d6bc6;border-radius:8.5px;"></div>
<svg class="a" style="left:888px;top:1012px;" width="41" height="41" viewBox="0 0 41 41"><path d="M8.300 20.500L17.200 29.500L31.400 12.300" stroke="#fff" stroke-width="4.8" stroke-linecap="round" stroke-linejoin="round" fill="none"/></svg>
<span class="a t" style="top:1019.22px;font-size:31px;color:#202223;letter-spacing:0.196px;-webkit-text-stroke:0.25px #202223;transform:scaleX(1.02);transform-origin:0 0;left:947.40px;">Export full column name</span>
<div class="a" style="left:888px;top:1082.5px;width:41px;height:41px;background:#3d6bc6;border-radius:8.5px;"></div>
<svg class="a" style="left:888px;top:1082.5px;" width="41" height="41" viewBox="0 0 41 41"><path d="M8.300 20.500L17.200 29.500L31.400 12.300" stroke="#fff" stroke-width="4.8" stroke-linecap="round" stroke-linejoin="round" fill="none"/></svg>
<span class="a t" style="top:1089.22px;font-size:31px;color:#202223;letter-spacing:0.251px;-webkit-text-stroke:0.25px #202223;transform:scaleX(1.02);transform-origin:0 0;left:946.80px;">Include the datetime in the file name</span>
<div class="a" style="left:816px;top:1203.5px;width:1364px;height:2px;background:#e1e3e5;"></div>
<div class="a" style="left:851.1px;top:1241.1px;width:595.8px;height:79.6px;background:#f3f4f6;border-radius:9px;"></div>
<span class="a t" style="top:1266.87px;font-size:30.1px;color:#1a1c1f;letter-spacing:0.323px;-webkit-text-stroke:0.45px #1a1c1f;transform:scaleX(1.05);transform-origin:0 0;left:886.80px;">Enable quick access to .XLSX report</span>
<div class="a" style="left:1787.4px;top:1241.1px;width:174.3px;height:79.4px;border:2px solid #d7d9dd;box-sizing:border-box;border-radius:9px;background:#fff;"></div>
<span class="a t" style="top:1266.43px;font-size:29.8px;color:#1a1c1f;letter-spacing:0.277px;-webkit-text-stroke:0.45px #1a1c1f;transform:scaleX(1.06);transform-origin:0 0;left:1824.80px;">Cancel</span>
<div class="a" style="left:1979.1px;top:1241.1px;width:166px;height:79.6px;background:#3a7d3f;border-radius:9px;"></div>
<span class="a t" style="top:1266.53px;font-size:29.8px;color:#ffffff;letter-spacing:0.145px;-webkit-text-stroke:0.5px #ffffff;transform:scaleX(1.08);transform-origin:0 0;left:2014.00px;">Export</span>
<svg class="a" style="left:1920px;top:1110px;" width="110" height="125" viewBox="1920 1110 110 125"><g fill="#e8412a" stroke="none"><path d="M1938.3 1126.1L1942.900 1122.700L1987.500 1181.200L1982.900 1184.600Z"/><circle cx="1940.600" cy="1124.400" r="2.85"/><path d="M2014 1223.800L1974.800 1188.700L1992 1176.300Z"/></g></svg>
</body></html>
